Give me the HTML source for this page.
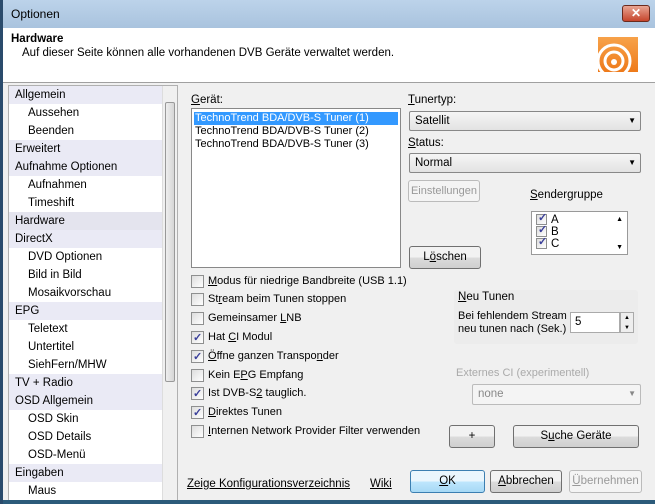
<!DOCTYPE html>
<html><head><meta charset="utf-8"><style>
*{margin:0;padding:0;box-sizing:border-box}
body{width:655px;height:504px;overflow:hidden;font-family:"Liberation Sans",sans-serif;font-size:11.5px;color:#000;background:#f0f0f0;position:relative}
.a{position:absolute}
.title{left:0;top:0;width:655px;height:28px;background:linear-gradient(#bcd3ea,#a9c3de);border-left:3px solid #2a4b6c}
.close{left:622px;top:5px;width:28px;height:17px;background:linear-gradient(#e8a593,#c6452c);border:1px solid #6b2a1d;border-radius:3px;color:#fff;font-weight:bold;text-align:center;line-height:14px;font-size:12px}
.hdr{left:3px;top:28px;width:652px;height:55px;background:#fff;border-bottom:1px solid #a0a0a0}
.tree{left:8px;top:85px;width:170px;height:419px;background:#fff;border:1px solid #b0b0b0;overflow:hidden}
.row{height:18px;line-height:18px;padding-left:6px;width:153px}
.cat{background:#eaeaf5}
.sub{padding-left:19px}
.sb{right:0;top:0;width:15px;height:100%;background:#f0f0f0;border-left:1px solid #ddd}
.u{text-decoration:underline}
.cb{width:13px;height:13px;border:1px solid #8e8f8f;background:linear-gradient(135deg,#ddd,#fff);display:inline-block;vertical-align:middle;margin-right:4px;position:relative}
.cb.c::after{content:"✓";position:absolute;left:1px;top:-3px;font-size:11px;color:#3a3f9a;font-weight:bold}
.chk{left:191px;height:18px;line-height:18px;white-space:nowrap;font-size:11px}
.btn{border:1px solid #707070;border-radius:3px;background:linear-gradient(#f2f2f2 50%,#dcdcdc 50%,#cfcfcf);text-align:center;line-height:20px}
.combo{border:1px solid #888;border-radius:2px;background:linear-gradient(#f6f6f6,#e2e2e2);padding-left:5px;line-height:18px}
.combo::after{content:"▼";position:absolute;right:4px;top:0;font-size:8px}
</style></head><body>
<div class="a title"><span class="a" style="left:8px;top:7px;font-size:12px">Optionen</span></div>
<div class="a close">✕</div>
<div class="a hdr">
 <div class="a" style="left:8px;top:5px;font-weight:bold">Hardware</div>
 <div class="a" style="left:19px;top:19px">Auf dieser Seite können alle vorhandenen DVB Geräte verwaltet werden.</div>
 <div class="a" style="left:595px;top:9px;width:40px;height:35px;background:linear-gradient(#f7a24a,#ee7a1a)">
 <svg width="40" height="35"><circle cx="16" cy="24" r="16" fill="none" stroke="#fff" stroke-width="3"/><circle cx="16" cy="24" r="9" fill="none" stroke="#fff" stroke-width="3"/><circle cx="16" cy="25" r="3" fill="#fff"/></svg></div>
</div>
<div class="a tree">
<div class="row cat">Allgemein</div><div class="row sub">Aussehen</div><div class="row sub">Beenden</div>
<div class="row cat">Erweitert</div><div class="row cat">Aufnahme Optionen</div><div class="row sub">Aufnahmen</div><div class="row sub">Timeshift</div>
<div class="row cat" style="background:#e4e4ee">Hardware</div><div class="row cat">DirectX</div><div class="row sub">DVD Optionen</div><div class="row sub">Bild in Bild</div><div class="row sub">Mosaikvorschau</div>
<div class="row cat">EPG</div><div class="row sub">Teletext</div><div class="row sub">Untertitel</div><div class="row sub">SiehFern/MHW</div>
<div class="row cat">TV + Radio</div><div class="row cat">OSD Allgemein</div><div class="row sub">OSD Skin</div><div class="row sub">OSD Details</div><div class="row sub">OSD-Menü</div>
<div class="row cat">Eingaben</div><div class="row sub">Maus</div>
<div class="a sb"><div class="a" style="left:2px;top:16px;width:10px;height:280px;background:linear-gradient(90deg,#eee,#d6d6d6);border:1px solid #999;border-radius:2px"></div></div>
</div>
<div class="a" style="left:191px;top:94px"><span class="u">G</span>erät:</div>
<div class="a" style="left:191px;top:108px;width:210px;height:160px;background:#fff;border:1px solid #888;font-size:11px">
 <div style="margin:3px 2px 0;background:#3399ff;color:#fff;padding-left:1px;line-height:13px">TechnoTrend BDA/DVB-S Tuner (1)</div>
 <div style="margin:0 3px;line-height:13px">TechnoTrend BDA/DVB-S Tuner (2)</div>
 <div style="margin:0 3px;line-height:13px">TechnoTrend BDA/DVB-S Tuner (3)</div>
</div>
<div class="a" style="left:408px;top:94px"><span class="u">T</span>unertyp:</div>
<div class="a combo" style="left:409px;top:111px;width:232px;height:20px">Satellit</div>
<div class="a" style="left:408px;top:137px"><span class="u">S</span>tatus:</div>
<div class="a combo" style="left:409px;top:153px;width:232px;height:20px">Normal</div>
<div class="a btn" style="left:408px;top:180px;width:72px;height:22px;color:#999;border-color:#bbb;background:#f4f4f4;font-size:11px">Einstellungen</div>
<div class="a" style="left:530px;top:189px"><span class="u">S</span>endergruppe</div>
<div class="a" style="left:531px;top:211px;width:97px;height:44px;background:#fff;border:1px solid #999;line-height:12px;padding:2px 0 0 4px">
<div><span class="cb c" style="width:11px;height:11px"></span>A</div><div><span class="cb c" style="width:11px;height:11px"></span>B</div><div><span class="cb c" style="width:11px;height:11px"></span>C</div>
<span class="a" style="right:4px;top:2px;font-size:7px">▲</span><span class="a" style="right:4px;top:30px;font-size:7px">▼</span></div>
<div class="a btn" style="left:409px;top:246px;width:72px;height:23px">L<span class="u">ö</span>schen</div>
<div class="a chk" style="top:272px"><span class="cb"></span><span class="u">M</span>odus für niedrige Bandbreite (USB 1.1)</div>
<div class="a chk" style="top:290px"><span class="cb"></span>St<span class="u">r</span>eam beim Tunen stoppen</div>
<div class="a chk" style="top:309px"><span class="cb"></span>Gemeinsamer <span class="u">L</span>NB</div>
<div class="a chk" style="top:328px"><span class="cb c"></span>Hat <span class="u">C</span>I Modul</div>
<div class="a chk" style="top:347px"><span class="cb c"></span><span class="u">Ö</span>ffne ganzen Transpo<span class="u">n</span>der</div>
<div class="a chk" style="top:366px"><span class="cb"></span>Kein E<span class="u">P</span>G Empfang</div>
<div class="a chk" style="top:384px"><span class="cb c"></span>Ist DVB-S<span class="u">2</span> tauglich.</div>
<div class="a chk" style="top:403px"><span class="cb c"></span><span class="u">D</span>irektes Tunen</div>
<div class="a chk" style="top:422px"><span class="cb"></span><span class="u">I</span>nternen Network Provider Filter verwenden</div>
<div class="a" style="left:454px;top:290px;width:184px;height:54px;background:#ececec;border-radius:3px"></div>
<div class="a" style="left:458px;top:291px"><span class="u">N</span>eu Tunen</div>
<div class="a" style="left:458px;top:310px;line-height:13px;font-size:11px">Bei fehlendem Stream<br>neu tunen nach (Sek.)</div>
<div class="a" style="left:570px;top:312px;width:50px;height:21px;background:#fff;border:1px solid #aaa;padding:3px 4px">5</div>
<div class="a" style="left:620px;top:312px;width:14px;height:21px;border:1px solid #aaa;background:#eee;font-size:6px;text-align:center;line-height:10px">▲<br>▼</div>
<div class="a" style="left:456px;top:367px;color:#aaa;font-size:11px">Externes CI (experimentell)</div>
<div class="a combo" style="left:472px;top:384px;width:169px;height:21px;color:#888;background:#f4f4f4;border-color:#bbb">none</div>
<div class="a btn" style="left:449px;top:425px;width:46px;height:23px">+</div>
<div class="a btn" style="left:513px;top:425px;width:126px;height:23px">S<span class="u">u</span>che Geräte</div>
<div class="a u" style="left:187px;top:478px">Zeige Konfigurationsverzeichnis</div>
<div class="a u" style="left:370px;top:478px">Wiki</div>
<div class="a btn" style="left:410px;top:470px;width:75px;height:23px;border-color:#3c7fb1;background:linear-gradient(#eaf6fd 50%,#bee6fd 50%,#a7d9f5)"><span class="u">O</span>K</div>
<div class="a btn" style="left:490px;top:470px;width:72px;height:23px"><span class="u">A</span>bbrechen</div>
<div class="a btn" style="left:569px;top:470px;width:73px;height:23px;color:#999;border-color:#bbb;background:#f4f4f4"><span class="u">Ü</span>bernehmen</div>
<div class="a" style="left:0;top:500px;width:655px;height:4px;background:#2c5b7a"></div>
<div class="a" style="left:0;top:0;width:3px;height:504px;background:#2a4b6c"></div>
</body></html>
